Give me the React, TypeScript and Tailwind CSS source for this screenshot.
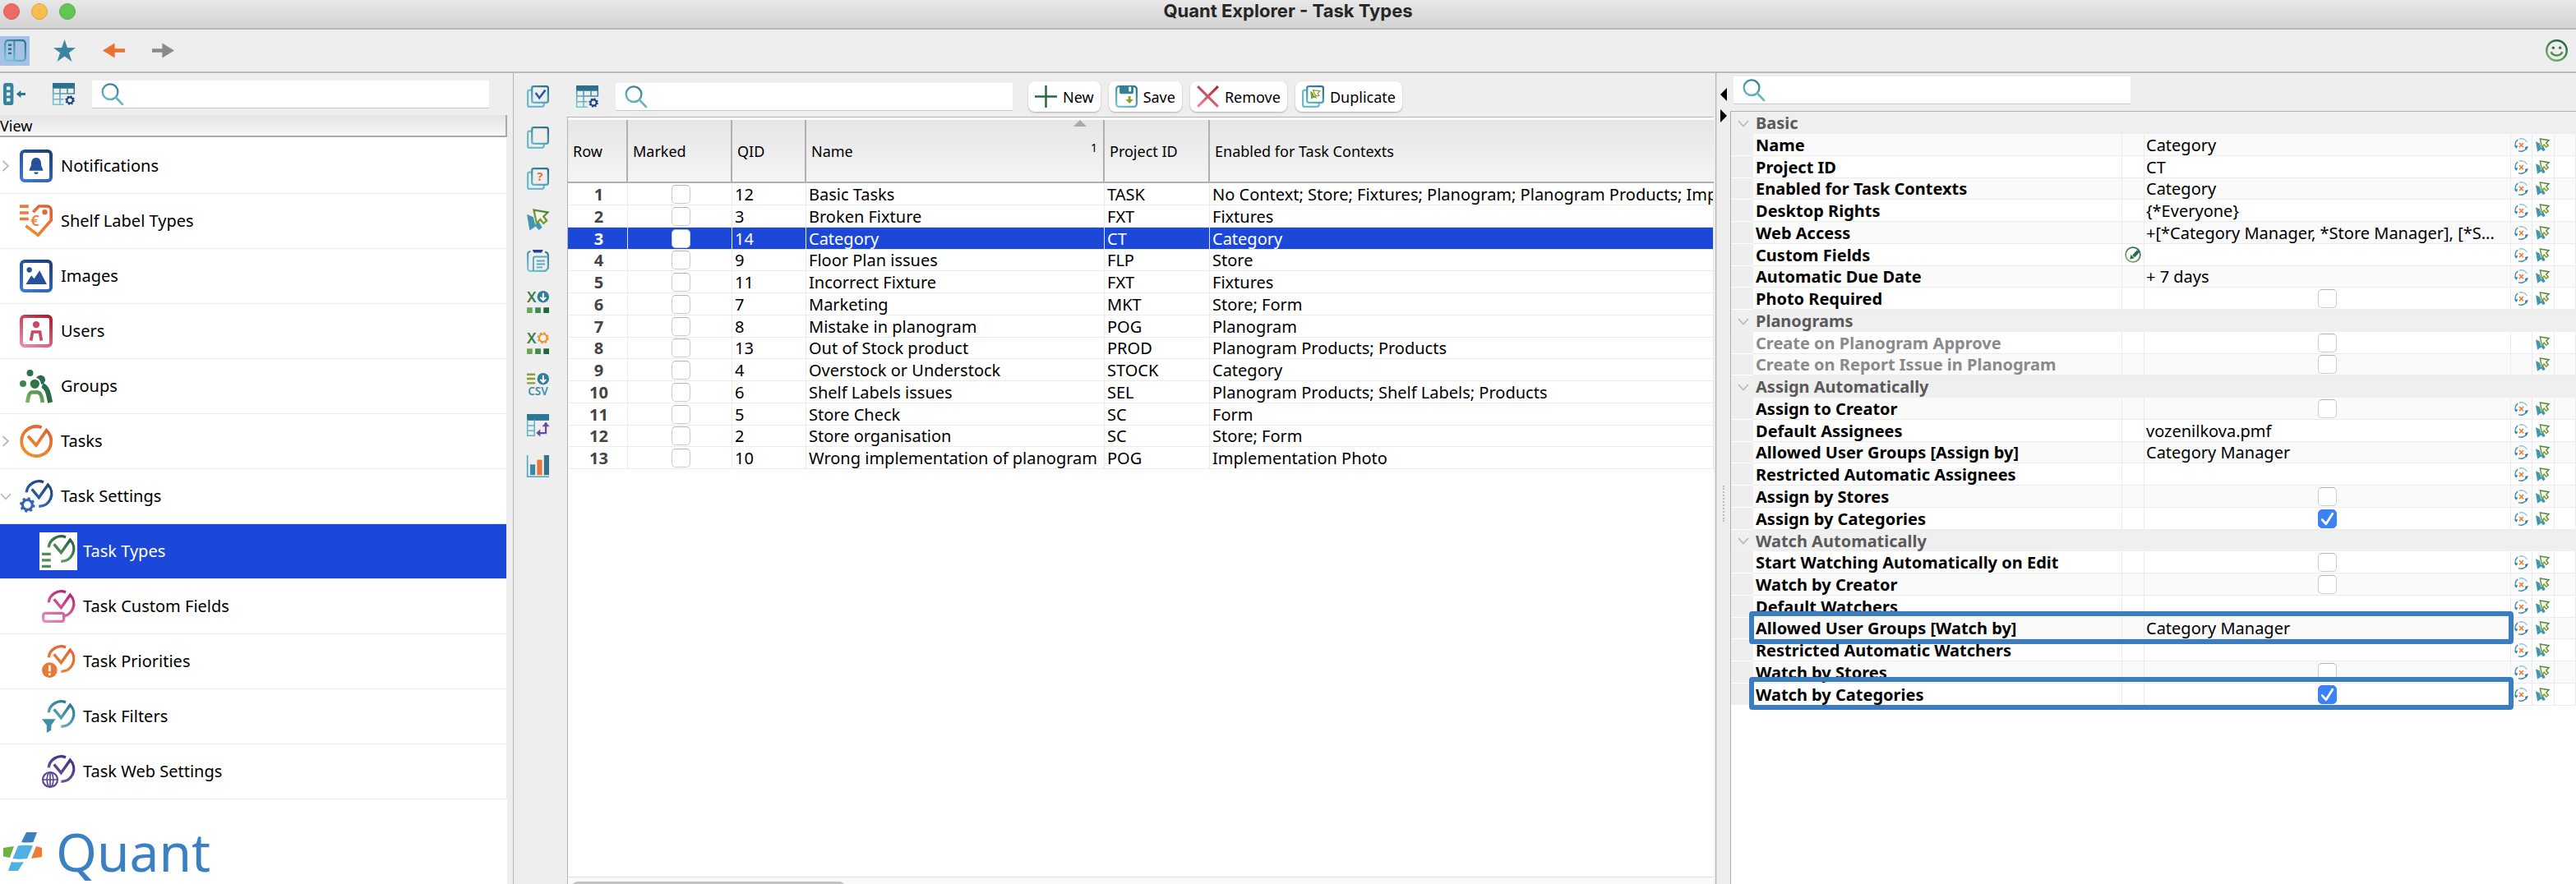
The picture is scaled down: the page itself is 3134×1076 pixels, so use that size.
import type { ReactNode } from "react";

type IconProps = { className?: string };

/* Shared colour ramps for all icons, they all use a 24x24 canvas */
const ramps: [string, string, string][] = [
  ["teal", "#2b6f8c", "#74c8d3"],
  ["blue", "#1b3f73", "#3b78cf"],
  ["orange", "#dd5f35", "#f0922f"],
  ["red", "#ac1f35", "#ea87a4"],
  ["green", "#1c5a40", "#7db562"],
  ["pink", "#b61d6b", "#e08cbc"],
  ["purple", "#402d7d", "#8064a8"],
  ["olive", "#3f7d3c", "#b0b524"],
];

function Ramps() {
  return (
    <svg className="absolute h-0 w-0" aria-hidden="true">
      <defs>
        {ramps.map(([id, from, to]) => (
          <linearGradient key={id} id={id} gradientUnits="userSpaceOnUse" x1="20" y1="0" x2="6" y2="24">
            <stop offset="0" stopColor={from} />
            <stop offset="1" stopColor={to} />
          </linearGradient>
        ))}
      </defs>
    </svg>
  );
}

function Icon({ className = "h-[27px] w-[27px]", children }: IconProps & { children: ReactNode }) {
  return (
    <svg className={`block shrink-0 overflow-visible ${className}`} viewBox="0 0 24 24" fill="none" aria-hidden="true">
      {children}
    </svg>
  );
}

function Gear({ cx, cy, r, color }: { cx: number; cy: number; r: number; color: string }) {
  const step = (2 * Math.PI * (r + 1)) / 8;
  return (
    <>
      <circle cx={cx} cy={cy} r={r} stroke={color} strokeWidth="1.9" />
      <circle cx={cx} cy={cy} r={r + 1} stroke={color} strokeWidth="1.9" strokeDasharray={`${step * 0.5} ${step * 0.5}`} />
    </>
  );
}

const SearchIcon = ({ className }: IconProps) => (
  <Icon className={className}>
    <circle cx="9.8" cy="9.5" r="8.3" stroke="url(#teal)" strokeWidth="2.1" />
    <path d="M15.8 15.5L23 23" stroke="#67b6c4" strokeWidth="2.5" strokeLinecap="round" />
  </Icon>
);

const TableGearIcon = () => (
  <Icon>
    <path d="M0 0H24V6H0Z" fill="#2b708f" />
    <path d="M.6 5V23.4H12M.6 11.5H23.4V5M.6 17.5H12M8 5V23.4M16 5V11.5" stroke="url(#teal)" strokeWidth="1.4" />
    <Gear cx={18.7} cy={18.7} r={3.2} color="#1f3f86" />
  </Icon>
);

const SheetsIcon = ({ children }: { children?: ReactNode }) => (
  <Icon>
    <path d="M5 5H3A2 2 0 0 0 1 7V21A2 2 0 0 0 3 23H16A2.5 2.5 0 0 0 18.5 20.5V19" stroke="#6bbccb" strokeWidth="2" />
    <rect x="5.5" y="1" width="17.5" height="17.5" rx="2" stroke="url(#teal)" strokeWidth="2" />
    {children}
  </Icon>
);

const CursorIcon = ({ className }: IconProps) => (
  <Icon className={className}>
    <path d="M0 6L7 9L9 17L13 14L16.5 20.5L13 23L9.5 19L3 23.5Z" fill="#3f97b4" />
    <path d="M7.5 1.5L22.5 4L18 8.5L21.5 13L18 16L14.5 11.5L10.5 15.5Z" fill="#f4f8ec" stroke="url(#olive)" strokeWidth="2" />
  </Icon>
);

const ResetIcon = ({ className }: IconProps) => (
  <Icon className={className}>
    <path d="M8 1.8A10.8 10.8 0 0 1 21.5 7" stroke="#7cc3d3" strokeWidth="1.8" />
    <path d="M6 3A10.8 10.8 0 0 0 2.5 16M7 22A10.8 10.8 0 0 0 21 17" stroke="#3f8fb0" strokeWidth="2" />
    <path d="M0 13.5L6 13L3.5 18ZM24 14L20.5 21L18 15.5Z" fill="#2f7d9e" />
    <path d="M8.5 8.5L15.5 16M15.5 8.5L8.5 16" stroke="#ee7b35" strokeWidth="2.2" />
  </Icon>
);

const Framed = ({ color, children }: { color: string; children: ReactNode }) => (
  <Icon className="h-10 w-10">
    <rect x="1.2" y="1.2" width="21.6" height="21.6" rx="2.4" stroke={color} strokeWidth="2.4" />
    {children}
  </Icon>
);

const BellIcon = () => (
  <Framed color="url(#blue)">
    <path d="M12 6C14.5 6 15.6 8 15.6 10.5C15.6 13 17 13.6 17 15.4H7C7 13.6 8.4 13 8.4 10.5C8.4 8 9.5 6 12 6Z" fill="#25519b" />
    <path d="M10.5 16.5H13.5A1.5 1.5 0 0 1 10.5 16.5Z" fill="#25519b" />
  </Framed>
);

const LabelIcon = () => (
  <Icon className="h-10 w-10">
    <path d="M0 1.3H6.5M0 6H6.5M0 10.5H6.5" stroke="#ea7c35" strokeWidth="2.2" />
    <path d="M9.8 5.5L14 1.2H20A3 3 0 0 1 22.9 4.2V11.5L13.4 22.3L4.5 15.5" stroke="url(#orange)" strokeWidth="2.2" />
    <circle cx="18.3" cy="5.5" r="1.9" fill="#e06b35" />
    <text x="8" y="15.5" fontSize="11" fontWeight="600" fontFamily="Noto Sans, sans-serif" fill="#ec8233">€</text>
  </Icon>
);

const ImageIcon = () => (
  <Framed color="url(#blue)">
    <circle cx="7" cy="7.5" r="1.9" fill="#25519b" />
    <path d="M4.5 18L8.5 11.5L10.5 14L14.5 8L19.8 18Z" fill="#25519b" />
  </Framed>
);

const UserIcon = () => (
  <Framed color="url(#red)">
    <circle cx="12" cy="7.3" r="2.5" fill="#c64a66" />
    <path d="M8.2 19L9.3 12.6H14.7L15.8 19" stroke="#c64a66" strokeWidth="2.2" />
  </Framed>
);

const GroupIcon = () => (
  <Icon className="h-10 w-10">
    <circle cx="7.5" cy="2.4" r="2.4" fill="#2f6f4b" />
    <circle cx="2.4" cy="10.2" r="2.4" fill="#3f8552" />
    <circle cx="15.2" cy="7.4" r="3.4" fill="#2a6b49" />
    <path d="M16.5 11.5C20.5 13 21 18 22.3 24" stroke="#2a6b49" strokeWidth="3.6" />
    <circle cx="11" cy="10.4" r="4" fill="#2f7549" stroke="#fff" strokeWidth="1.2" />
    <path d="M5.6 24C6.2 19.5 7 16.5 9 16.5H13C15 16.5 16.2 19.5 16.7 24" stroke="url(#green)" strokeWidth="2.8" />
  </Icon>
);

const TasksIcon = () => (
  <Icon className="h-10 w-10">
    <path d="M6 8.3L12 15L19.5 4.2A10.8 10.8 0 1 1 16 2" stroke="url(#orange)" strokeWidth="2.3" />
  </Icon>
);

/* Task ring with a small badge in the lower left corner */
const TaskRing = ({ color, children }: { color: string; children: ReactNode }) => (
  <Icon className="h-10 w-10">
    <path
      d="M8.8 6.8L14 13L20.6 3.7A9.2 9.2 0 0 1 14 19.4M4.9 9.2A9.2 9.2 0 0 1 17.4 1.7"
      stroke={color}
      strokeWidth="2"
    />
    {children}
  </Icon>
);

interface TreeItem {
  label: string;
  icon: ReactNode;
  child?: boolean;
  toggle?: "open" | "closed";
  selected?: boolean;
}

const treeItems: TreeItem[] = [
  { label: "Notifications", icon: <BellIcon />, toggle: "closed" },
  { label: "Shelf Label Types", icon: <LabelIcon /> },
  { label: "Images", icon: <ImageIcon /> },
  { label: "Users", icon: <UserIcon /> },
  { label: "Groups", icon: <GroupIcon /> },
  { label: "Tasks", icon: <TasksIcon />, toggle: "closed" },
  {
    label: "Task Settings",
    toggle: "open",
    icon: (
      <TaskRing color="url(#blue)">
        <Gear cx={5.6} cy={18.3} r={3.6} color="#3265b3" />
      </TaskRing>
    ),
  },
  {
    label: "Task Types",
    child: true,
    selected: true,
    icon: (
      <TaskRing color="url(#green)">
        <path d="M0 14H6.5M0 18.5H6.5M0 23H6.5" stroke="#4f8f55" strokeWidth="2" />
      </TaskRing>
    ),
  },
  {
    label: "Task Custom Fields",
    child: true,
    icon: (
      <TaskRing color="url(#pink)">
        <rect x="1" y="17" width="15" height="6" rx="1.5" fill="#fff" stroke="url(#pink)" strokeWidth="2" />
      </TaskRing>
    ),
  },
  {
    label: "Task Priorities",
    child: true,
    icon: (
      <TaskRing color="url(#orange)">
        <circle cx="5.6" cy="18.4" r="5.6" fill="#ea7a33" />
        <path d="M5.6 14.8V19.3M5.6 20.6V22.2" stroke="#fff" strokeWidth="1.7" />
      </TaskRing>
    ),
  },
  {
    label: "Task Filters",
    child: true,
    icon: (
      <TaskRing color="url(#teal)">
        <path d="M0 14H10L6.8 18.5V22L3.5 24V18.5Z" fill="#3d8ea6" />
      </TaskRing>
    ),
  },
  {
    label: "Task Web Settings",
    child: true,
    icon: (
      <TaskRing color="url(#purple)">
        <circle cx="6" cy="18" r="5.4" fill="#fff" stroke="#5b4794" strokeWidth="1.3" />
        <ellipse cx="6" cy="18" rx="2.3" ry="5.4" stroke="#5b4794" />
        <path d="M.7 18H11.3M6 12.700V23.3" stroke="#5b4794" />
      </TaskRing>
    ),
  },
];

const DownloadBadge = () => (
  <>
    <circle cx="17.6" cy="6.4" r="6.4" fill="#2f7d9b" />
    <path d="M17.6 2.5V9.5M14.5 7L17.6 10L20.7 7" stroke="#fff" strokeWidth="1.8" />
  </>
);

const ExcelMark = () => (
  <>
    <text x="0" y="12" fontSize="16" fontWeight="600" fontFamily="Noto Sans, sans-serif" fill="#38804a">X</text>
    <path d="M0 18H6V24H0Z" fill="#6aa653" />
    <path d="M9 18H15V24H9Z" fill="#3f8a4c" />
    <path d="M18 18H24V24H18Z" fill="#22663f" />
  </>
);

const sideTools: { label: string; icon: ReactNode }[] = [
  {
    label: "Mark all",
    icon: (
      <SheetsIcon>
        <path d="M9.5 8L13.5 13.5L20 5" stroke="#2456a6" strokeWidth="2.2" />
      </SheetsIcon>
    ),
  },
  { label: "Unmark all", icon: <SheetsIcon /> },
  {
    label: "Mark by condition",
    icon: (
      <SheetsIcon>
        <text x="14.3" y="14.5" textAnchor="middle" fontSize="13" fontWeight="700" fontFamily="Noto Sans, sans-serif" fill="#ee6f35">?</text>
      </SheetsIcon>
    ),
  },
  { label: "Go to", icon: <CursorIcon /> },
  {
    label: "Paste",
    icon: (
      <Icon>
        <path d="M4 2H3.5A2.5 2.5 0 0 0 1 4.5V20.5A2.5 2.5 0 0 0 3.5 23H20L23 20V6.5A4 4 0 0 0 19.5 2.5" stroke="url(#teal)" strokeWidth="1.9" />
        <path d="M6 0H17.5L16 3H7.5Z" fill="#1f4391" />
        <path d="M7 23V9.5A2 2 0 0 1 9 7.5H23M10.5 12H19.5M10.5 15.5H19.5M10.5 19H17" stroke="#58a9bd" strokeWidth="1.7" />
      </Icon>
    ),
  },
  {
    label: "Export to Excel",
    icon: (
      <Icon>
        <ExcelMark />
        <DownloadBadge />
      </Icon>
    ),
  },
  {
    label: "Excel settings",
    icon: (
      <Icon>
        <ExcelMark />
        <Gear cx={17.5} cy={6.5} r={4.3} color="#ee9430" />
      </Icon>
    ),
  },
  {
    label: "Export to CSV",
    icon: (
      <Icon>
        <path d="M0 1.5H9M0 6.2H9M0 11H9" stroke="#8f9f2c" strokeWidth="2.2" />
        <DownloadBadge />
        <text x="12" y="24" textAnchor="middle" fontSize="12" fontWeight="600" fontFamily="Noto Sans, sans-serif" fill="#3d90a9">CSV</text>
      </Icon>
    ),
  },
  {
    label: "Pivot",
    icon: (
      <Icon>
        <path d="M0 0H24V7H0Z" fill="#2f7895" />
        <path d="M.6 6V23.4H8.2V6M.6 12.5H8.2M.6 18H8.2" stroke="#5fb0c3" strokeWidth="1.3" />
        <path d="M13 20.5H20.5V12.5" stroke="#6a4a9c" strokeWidth="2" />
        <path d="M10 20.5L14.5 16.5V24.5ZM20.5 8.5L16.5 13.5H24.5Z" fill="#6a4a9c" />
      </Icon>
    ),
  },
  {
    label: "Chart",
    icon: (
      <Icon>
        <path d="M.6 0V23.3H24" stroke="#4fa2bb" strokeWidth="1.4" />
        <path d="M3.5 10H9V21.5H3.5Z" fill="#3b8aab" />
        <path d="M11 5H16.5V21.5H11Z" fill="#e8793b" />
        <path d="M18.5 0H24V21.5H18.5Z" fill="#35728f" />
      </Icon>
    ),
  },
];

const actions: { label: string; icon: ReactNode }[] = [
  {
    label: "New",
    icon: (
      <Icon>
        <path d="M12 0V24M0 12H24" stroke="#27693f" strokeWidth="2.2" />
      </Icon>
    ),
  },
  {
    label: "Save",
    icon: (
      <Icon>
        <rect x="1" y="1" width="22" height="22" rx="3" stroke="url(#teal)" strokeWidth="2" />
        <path d="M4.5 0H19.5V7.5A1.5 1.5 0 0 1 18 9H6A1.5 1.5 0 0 1 4.5 7.5Z" fill="#338099" />
        <path d="M14.5 1.5H17V6.5H14.5Z" fill="#fff" />
        <path d="M14 11.5H16.5V15H19.5L15.2 19.5L11 15H14Z" fill="#8d9f2b" />
      </Icon>
    ),
  },
  {
    label: "Remove",
    icon: (
      <Icon>
        <path d="M1 1L23 23M23 1L1 23" stroke="url(#red)" strokeWidth="2.6" />
      </Icon>
    ),
  },
  {
    label: "Duplicate",
    icon: (
      <SheetsIcon>
        <path d="M9 6L12 8L13 11L15 11L16 14L12.5 13L10 15Z" fill="#7f9f2d" />
        <path d="M12 5L19.5 6L17 8.5L18.5 11L16 11.5L14 10Z" stroke="#7f9f2d" />
      </SheetsIcon>
    ),
  },
];

type Task = [qid: number, name: string, project: string, contexts: string];

const tasks: Task[] = [
  [12, "Basic Tasks", "TASK", "No Context; Store; Fixtures; Planogram; Planogram Products; Implementation Photo"],
  [3, "Broken Fixture", "FXT", "Fixtures"],
  [14, "Category", "CT", "Category"],
  [9, "Floor Plan issues", "FLP", "Store"],
  [11, "Incorrect Fixture", "FXT", "Fixtures"],
  [7, "Marketing", "MKT", "Store; Form"],
  [8, "Mistake in planogram", "POG", "Planogram"],
  [13, "Out of Stock product", "PROD", "Planogram Products; Products"],
  [4, "Overstock or Understock", "STOCK", "Category"],
  [6, "Shelf Labels issues", "SEL", "Planogram Products; Shelf Labels; Products"],
  [5, "Store Check", "SC", "Form"],
  [2, "Store organisation", "SC", "Store; Form"],
  [10, "Wrong implementation of planogram", "POG", "Implementation Photo"],
];

interface Property {
  label: string;
  group?: boolean;
  value?: string;
  checked?: boolean;
  disabled?: boolean;
  editable?: boolean;
  highlight?: boolean;
}

const properties: Property[] = [
  { label: "Basic", group: true },
  { label: "Name", value: "Category" },
  { label: "Project ID", value: "CT" },
  { label: "Enabled for Task Contexts", value: "Category" },
  { label: "Desktop Rights", value: "{*Everyone}" },
  { label: "Web Access", value: "+[*Category Manager, *Store Manager], [*S..." },
  { label: "Custom Fields", editable: true },
  { label: "Automatic Due Date", value: "+ 7 days" },
  { label: "Photo Required", checked: false },
  { label: "Planograms", group: true },
  { label: "Create on Planogram Approve", checked: false, disabled: true },
  { label: "Create on Report Issue in Planogram", checked: false, disabled: true },
  { label: "Assign Automatically", group: true },
  { label: "Assign to Creator", checked: false },
  { label: "Default Assignees", value: "vozenilkova.pmf" },
  { label: "Allowed User Groups [Assign by]", value: "Category Manager" },
  { label: "Restricted Automatic Assignees" },
  { label: "Assign by Stores", checked: false },
  { label: "Assign by Categories", checked: true },
  { label: "Watch Automatically", group: true },
  { label: "Start Watching Automatically on Edit", checked: false },
  { label: "Watch by Creator", checked: false },
  { label: "Default Watchers" },
  { label: "Allowed User Groups [Watch by]", value: "Category Manager", highlight: true },
  { label: "Restricted Automatic Watchers" },
  { label: "Watch by Stores", checked: false },
  { label: "Watch by Categories", checked: true, highlight: true },
];

function Checkbox({ label, checked = false, disabled }: { label: string; checked?: boolean; disabled?: boolean }) {
  return (
    <span className="relative mx-auto block h-[23px] w-[23px]">
      <input
        type="checkbox"
        aria-label={label}
        defaultChecked={checked}
        disabled={disabled}
        className="peer block h-full w-full appearance-none rounded-[5px] border border-[#cbcbcb] border-t-[#b4b4b4] bg-white checked:border-[#3b82f6] checked:bg-[#3b82f6]"
      />
      <svg className="pointer-events-none absolute inset-0 hidden peer-checked:block" viewBox="0 0 22 22" fill="none">
        <path d="M5 12L9.5 17L17 5" stroke="#fff" strokeWidth="2.6" strokeLinecap="round" strokeLinejoin="round" />
      </svg>
    </span>
  );
}

function SearchBox({ label, className }: { label: string; className: string }) {
  return (
    <label className={`flex h-[34px] items-center border-b border-[#c9c9c9] bg-white pl-[11px] ${className}`}>
      <SearchIcon />
      <input type="search" aria-label={label} className="min-w-0 flex-1 px-2 outline-none" />
    </label>
  );
}

function Chevron({ open }: { open?: boolean }) {
  return (
    <svg className="block h-3.5 w-3.5" viewBox="0 0 14 14" fill="none" stroke="#b9b9b9" strokeWidth="1.8">
      {open ? <path d="M1 4L7 10.5L13 4" /> : <path d="M3.5 1L10 7L3.5 13" />}
    </svg>
  );
}

function TitleBar() {
  return (
    <header className="relative flex h-9 shrink-0 items-start justify-center border-b-2 border-[#b8b8b8] bg-gradient-to-b from-[#e8e8e8] to-[#d3d3d3]">
      <div className="absolute left-1 top-1 flex gap-[14px]">
        <span className="h-5 w-5 rounded-full border border-[#d55a50] bg-[#ed6b60]" />
        <span className="h-5 w-5 rounded-full border border-[#dba33c] bg-[#f5bf4f]" />
        <span className="h-5 w-5 rounded-full border border-[#52ad44] bg-[#62c655]" />
      </div>
      <h1 className="font-[Inter] text-[22px] font-bold leading-[26px] text-[#262626]">Quant Explorer - Task Types</h1>
    </header>
  );
}

function MainToolbar() {
  const button = "flex h-9 w-9 items-center justify-center";

  return (
    <div className="flex h-[53px] shrink-0 items-center justify-between border-b-2 border-[#bcbcbc] bg-[#eeeeee] pr-[10px]">
      <div className="flex items-center gap-6">
        <button aria-label="Toggle side panel" className={`${button} bg-[#a5c2e6]`}>
          <Icon>
            <rect x="1" y="1" width="22" height="22" rx="3.5" stroke="url(#teal)" strokeWidth="2" />
            <path d="M11 1V23" stroke="url(#teal)" strokeWidth="1.8" />
            <path d="M4.5 6H8M4.5 10.5H8M4.5 15H8" stroke="#2b6f8c" strokeWidth="2.2" />
          </Icon>
        </button>
        <button aria-label="Favourites" className={button}>
          <Icon>
            <path d="M12 0L15 8.8L24 9L16.8 14.5L20 24L12 18.3L4 24L7.2 14.5L0 9L9 8.8Z" fill="#3a86a0" />
          </Icon>
        </button>
        <button aria-label="Back" className={button}>
          <Icon>
            <path d="M0 12L13 4V10H24V14H13V20Z" fill="#ea7131" />
          </Icon>
        </button>
        <button aria-label="Forward" className={button}>
          <Icon>
            <path d="M24 12L11 4V10H0V14H11V20Z" fill="#8a8a8a" />
          </Icon>
        </button>
      </div>
      <button aria-label="Feedback">
        <Icon>
          <circle cx="12" cy="12" r="10.9" stroke="url(#green)" strokeWidth="2.2" />
          <circle cx="8.3" cy="9" r="1.5" fill="#2f6e4b" />
          <circle cx="15.7" cy="9" r="1.5" fill="#2f6e4b" />
          <path d="M6 13.5C7.5 18.5 16.5 18.5 18 13.5" stroke="#4f8d55" strokeWidth="2.2" />
        </Icon>
      </button>
    </div>
  );
}

function Sidebar() {
  return (
    <aside className="flex w-[625px] shrink-0 flex-col overflow-hidden border-r border-[#b4b4b4] bg-[#eeeeee] pr-[7px]">
      <div className="flex h-[51px] shrink-0 items-center pl-1">
        <button aria-label="Dock panel" className="mr-[33px]">
          <Icon>
            <rect x="0" y="0" width="11" height="24" rx="3" fill="#37829c" />
            <path d="M3.5 4H7.5V7.5H3.5ZM3.5 10.2H7.5V13.7H3.5ZM3.5 16.5H7.5V20H3.5Z" fill="#eef7f9" />
            <path d="M14 12L19 8V10.7H24V13.3H19V16Z" fill="#2f728d" />
          </Icon>
        </button>
        <button aria-label="Table settings">
          <TableGearIcon />
        </button>
        <SearchBox label="Search views" className="ml-[21px] w-[483px]" />
      </div>
      <div className="h-[27px] shrink-0 border-b-2 border-r-2 border-[#a9a9a9] bg-gradient-to-b from-[#e4e4e4] to-[#f8f8f8] text-lg leading-[26px]">
        View
      </div>
      <nav className="flex min-h-0 flex-1 flex-col bg-white pt-0.5">
        <ul>
          {treeItems.map((item) => (
            <li key={item.label}>
              <button
                className={`flex h-[67px] w-full items-center border-b border-r border-[#ececec] text-left ${
                  item.selected ? "bg-[#1c48d9] text-white" : ""
                } ${item.child ? "pl-12" : "pl-0"}`}
              >
                {!item.child && <span className="w-[21px] shrink-0">{item.toggle && <Chevron open={item.toggle === "open"} />}</span>}
                <span className={`p-[3px] ${item.selected ? "bg-white" : ""}`}>{item.icon}</span>
                <span className="ml-[7px]">{item.label}</span>
              </button>
            </li>
          ))}
        </ul>
        <div className="flex items-center gap-4 pl-1 pt-7">
          <svg className="h-12 w-12" viewBox="0 0 48 48" aria-hidden="true">
            <path d="M28 0H41L36.5 12Q29 13 22 12Z" fill="#3b7fc4" />
            <path d="M18 16.5Q27 15 36 16.5L29 32Q20 33.5 11.5 32Z" fill="#4fb0e4" />
            <path d="M10 36Q18 37 25 36L18 47H6Z" fill="#4fb0e4" />
            <path d="M0 19L13 17L8 31L0 29.5Z" fill="#6cb33f" />
            <path d="M40 17L47 19V30L34 32Z" fill="#ec7d35" />
          </svg>
          <span className="text-[64px] leading-[72px] text-[#3b80c3]">Quant</span>
        </div>
      </nav>
    </aside>
  );
}

function TaskTable() {
  const head = "border-b-2 border-r-2 border-[#b0b0b0] pl-1.5 text-left text-lg font-normal";
  const cell = "overflow-hidden whitespace-nowrap border-b border-r border-[#ebebeb] pl-[3px]";

  return (
    <div className="flex min-h-0 flex-1 flex-col overflow-hidden border-l border-t border-[#b4b4b4] bg-white pt-[3px]">
      <table className="w-full table-fixed border-separate border-spacing-0">
        <colgroup>
          <col className="w-[73px]" />
          <col className="w-[127px]" />
          <col className="w-[90px]" />
          <col className="w-[363px]" />
          <col className="w-[128px]" />
          <col />
        </colgroup>
        <thead className="bg-gradient-to-b from-[#e6e6e6] to-[#f5f5f5]">
          <tr className="h-[77px]">
            <th className={head}>Row</th>
            <th className={head}>Marked</th>
            <th className={head}>QID</th>
            <th className={`${head} relative pr-[7px]`}>
              <span className="flex items-start justify-between">
                Name <span className="text-sm">1</span>
              </span>
              <svg className="absolute right-5 top-0 h-2 w-4" viewBox="0 0 16 8">
                <path d="M8 0L16 8H0Z" fill="#a9a9a9" />
              </svg>
            </th>
            <th className={head}>Project ID</th>
            <th className="border-b-2 border-[#b0b0b0] pl-1.5 text-left text-lg font-normal">Enabled for Task Contexts</th>
          </tr>
        </thead>
        <tbody>
          {tasks.map(([qid, name, project, contexts], i) => (
            <tr
              key={qid}
              className={`h-[27px] leading-[25px] nth-[4n]:h-[26px] ${qid === 14 ? "bg-[#1c48d9] text-white" : ""}`}
            >
              <td className={`${cell} text-center font-bold ${qid === 14 ? "" : "text-[#444]"}`}>{i + 1}</td>
              <td className={cell}>
                <Checkbox label={`Mark ${name}`} />
              </td>
              <td className={cell}>{qid}</td>
              <td className={cell}>{name}</td>
              <td className={cell}>{project}</td>
              <td className={cell}>{contexts}</td>
            </tr>
          ))}
        </tbody>
      </table>
      <div className="mt-auto h-[9px] shrink-0 overflow-hidden border-t border-[#dedede] bg-[#fafafa] pl-[5px] pt-[5px]">
        <div className="h-3.5 w-[332px] rounded-full bg-[#c1c1c1]" />
      </div>
    </div>
  );
}

function Workspace() {
  return (
    <main className="flex min-w-0 flex-1 border-r border-[#b4b4b4] bg-[#eeeeee] pr-0.5">
      <div className="flex w-[65px] shrink-0 flex-col gap-[23px] pl-4 pt-[15px]">
        {sideTools.map((tool) => (
          <button key={tool.label} aria-label={tool.label} className="w-[27px]">
            {tool.icon}
          </button>
        ))}
      </div>
      <div className="flex min-w-0 flex-1 flex-col">
        <div className="flex h-[53px] shrink-0 items-center pl-[11px] pt-1">
          <button aria-label="Table settings">
            <TableGearIcon />
          </button>
          <SearchBox label="Search task types" className="ml-[21px] w-[483px]" />
          <div className="ml-[19px] flex gap-[10px]">
            {actions.map((action) => (
              <button key={action.label} className="flex h-[37px] items-center gap-[7px] rounded-lg bg-white px-2 text-lg shadow-[0_1px_2px_#0004]">
                {action.icon}
                {action.label}
              </button>
            ))}
          </div>
        </div>
        <TaskTable />
      </div>
    </main>
  );
}

function PropertyRow({ item }: { item: Property }) {
  if (item.group) {
    return (
      <tr className="h-[27px] bg-[#efefef] nth-[4n]:h-[26px]">
        <td className="pl-2">
          <Chevron open />
        </td>
        <th colSpan={6} className="pl-[3px] text-left font-bold text-[#5a5a5a]">
          {item.label}
        </th>
      </tr>
    );
  }

  const cell = "border-b border-r border-[#ebebeb]";
  return (
    <tr className="relative h-[27px] odd:bg-white even:bg-[#fafafa] nth-[4n]:h-[26px]">
      <td className="border-b border-white bg-[#eeeeee]">
        {item.highlight && (
          <div className="pointer-events-none absolute -top-2 left-[22px] right-[76px] z-10 h-10 rounded-[4px] border-[6px] border-[#3b7dbf]" />
        )}
      </td>
      <th className={`${cell} whitespace-nowrap pl-[3px] text-left font-bold ${item.disabled ? "text-[#8a8a8a]" : ""}`}>{item.label}</th>
      <td className={cell}>
        {item.editable && (
          <Icon className="mx-auto h-5 w-5">
            <circle cx="12" cy="12" r="10.7" stroke="url(#green)" strokeWidth="2" />
            <path d="M11 13L18 5L22 8L14.5 16Z" fill="#2a6b48" />
            <path d="M9 12L14 17L7.5 18.5Z" fill="#2a6b48" />
          </Icon>
        )}
      </td>
      <td className={`${cell} truncate px-0.5`}>
        {item.value}
        {item.checked !== undefined && <Checkbox label={item.label} checked={item.checked} disabled={item.disabled} />}
      </td>
      <td className={cell}>{!item.disabled && <ResetIcon className="mx-auto h-[17px] w-[17px]" />}</td>
      <td className={cell}>
        <CursorIcon className="mx-auto h-[17px] w-[17px]" />
      </td>
      <td className={cell} />
    </tr>
  );
}

function PropertiesPanel() {
  return (
    <aside className="flex w-[1046px] shrink-0 bg-[#eeeeee]">
      {/* Splitter */}
      <div className="flex w-[17px] shrink-0 flex-col items-center border-l border-[#dcdcdc] pt-[18px]">
        <button aria-label="Collapse left">
          <svg className="block h-4 w-2" viewBox="0 0 8 16">
            <path d="M8 0V16L0 8Z" />
          </svg>
        </button>
        <button aria-label="Collapse right" className="mt-[10px]">
          <svg className="block h-4 w-2" viewBox="0 0 8 16">
            <path d="M0 0V16L8 8Z" />
          </svg>
        </button>
        <div className="my-auto h-11 border-l-2 border-dotted border-[#bdbdbd]" />
      </div>
      <div className="flex min-w-0 flex-1 flex-col">
        <div className="flex h-[46px] shrink-0 items-start pl-1 pt-1">
          <SearchBox label="Search properties" className="w-[483px]" />
        </div>
        <div className="min-h-0 flex-1 overflow-hidden border-l border-t border-[#b0b0b0] bg-white">
          <table className="w-full table-fixed border-separate border-spacing-0 leading-[25px]">
            <colgroup>
              <col className="w-[27px]" />
              <col className="w-[449px]" />
              <col className="w-[27px]" />
              <col />
              <col className="w-[26px]" />
              <col className="w-[27px]" />
              <col className="w-[26px]" />
            </colgroup>
            <tbody>
              {properties.map((item) => (
                <PropertyRow key={item.label} item={item} />
              ))}
            </tbody>
          </table>
        </div>
      </div>
    </aside>
  );
}

export default function App() {
  return (
    <div className="flex h-screen flex-col overflow-hidden bg-[#eeeeee] font-['Noto_Sans',sans-serif] text-xl text-black">
      <Ramps />
      <TitleBar />
      <MainToolbar />
      <div className="flex min-h-0 flex-1">
        <Sidebar />
        <Workspace />
        <PropertiesPanel />
      </div>
    </div>
  );
}
